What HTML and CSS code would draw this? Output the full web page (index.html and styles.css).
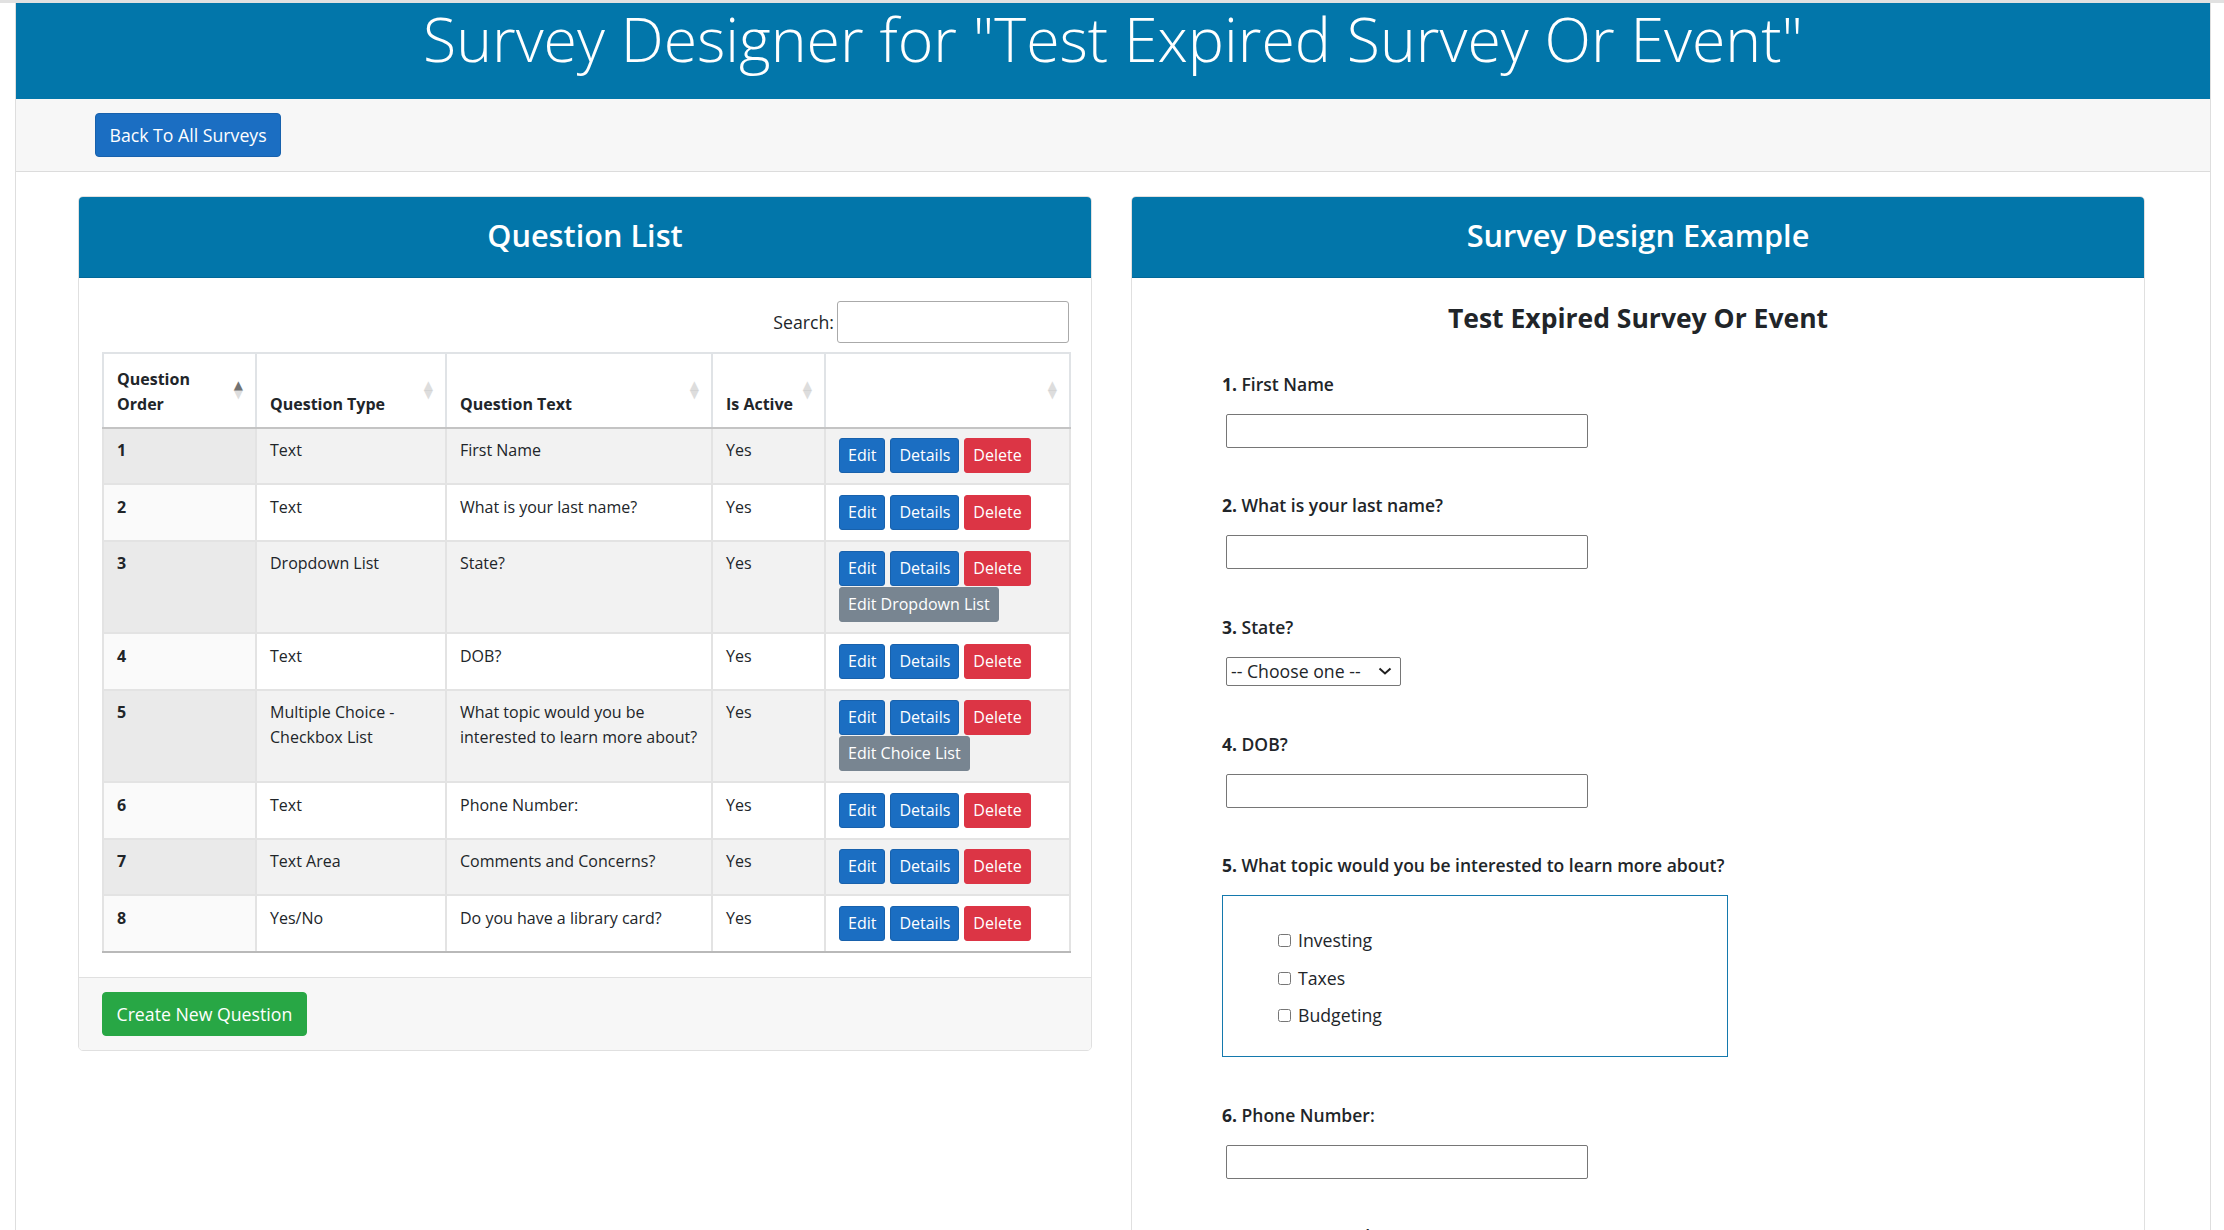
FILE: index.html
```html
<!DOCTYPE html>
<html lang="en">
<head>
<meta charset="utf-8">
<title>Survey Designer</title>
<link rel="stylesheet" href="styles.css">
</head>
<body>
<div class="page">
  <header class="banner">
    <h1 class="banner-title">Survey Designer for "Test Expired Survey Or Event"</h1>
  </header>
  <nav class="toolbar">
    <a class="btn btn-md btn-primary" href="#">Back To All Surveys</a>
  </nav>
  <main class="content">
    <section class="card">
      <div class="card-header"><h2 class="card-title">Question List</h2></div>
      <div class="card-body">
        <div class="dt-filter">
          <label class="dt-search">Search:<input type="search" class="dt-input"></label>
        </div>
        <table class="dt">
          <colgroup>
            <col class="c-order"><col class="c-type"><col class="c-text"><col class="c-active"><col class="c-actions">
          </colgroup>
          <thead>
            <tr>
              <th class="sort sort-asc">Question Order</th>
              <th class="sort">Question Type</th>
              <th class="sort">Question Text</th>
              <th class="sort">Is Active</th>
              <th class="sort"></th>
            </tr>
          </thead>
          <tbody>
            <tr>
              <td>1</td><td>Text</td><td>First Name</td><td>Yes</td>
              <td><div class="actions"><a class="btn btn-sm btn-primary" href="#">Edit</a><a class="btn btn-sm btn-primary" href="#">Details</a><a class="btn btn-sm btn-danger" href="#">Delete</a></div></td>
            </tr>
            <tr>
              <td>2</td><td>Text</td><td>What is your last name?</td><td>Yes</td>
              <td><div class="actions"><a class="btn btn-sm btn-primary" href="#">Edit</a><a class="btn btn-sm btn-primary" href="#">Details</a><a class="btn btn-sm btn-danger" href="#">Delete</a></div></td>
            </tr>
            <tr>
              <td>3</td><td>Dropdown List</td><td>State?</td><td>Yes</td>
              <td><div class="actions"><a class="btn btn-sm btn-primary" href="#">Edit</a><a class="btn btn-sm btn-primary" href="#">Details</a><a class="btn btn-sm btn-danger" href="#">Delete</a><a class="btn btn-sm btn-secondary" href="#">Edit Dropdown List</a></div></td>
            </tr>
            <tr>
              <td>4</td><td>Text</td><td>DOB?</td><td>Yes</td>
              <td><div class="actions"><a class="btn btn-sm btn-primary" href="#">Edit</a><a class="btn btn-sm btn-primary" href="#">Details</a><a class="btn btn-sm btn-danger" href="#">Delete</a></div></td>
            </tr>
            <tr>
              <td>5</td><td>Multiple Choice - Checkbox List</td><td>What topic would you be interested to learn more about?</td><td>Yes</td>
              <td><div class="actions"><a class="btn btn-sm btn-primary" href="#">Edit</a><a class="btn btn-sm btn-primary" href="#">Details</a><a class="btn btn-sm btn-danger" href="#">Delete</a><a class="btn btn-sm btn-secondary" href="#">Edit Choice List</a></div></td>
            </tr>
            <tr>
              <td>6</td><td>Text</td><td>Phone Number:</td><td>Yes</td>
              <td><div class="actions"><a class="btn btn-sm btn-primary" href="#">Edit</a><a class="btn btn-sm btn-primary" href="#">Details</a><a class="btn btn-sm btn-danger" href="#">Delete</a></div></td>
            </tr>
            <tr>
              <td>7</td><td>Text Area</td><td>Comments and Concerns?</td><td>Yes</td>
              <td><div class="actions"><a class="btn btn-sm btn-primary" href="#">Edit</a><a class="btn btn-sm btn-primary" href="#">Details</a><a class="btn btn-sm btn-danger" href="#">Delete</a></div></td>
            </tr>
            <tr>
              <td>8</td><td>Yes/No</td><td>Do you have a library card?</td><td>Yes</td>
              <td><div class="actions"><a class="btn btn-sm btn-primary" href="#">Edit</a><a class="btn btn-sm btn-primary" href="#">Details</a><a class="btn btn-sm btn-danger" href="#">Delete</a></div></td>
            </tr>
          </tbody>
        </table>
      </div>
      <div class="card-footer">
        <a class="btn btn-md btn-success" href="#">Create New Question</a>
      </div>
    </section>

    <section class="card">
      <div class="card-header"><h2 class="card-title">Survey Design Example</h2></div>
      <div class="card-body survey">
        <h4 class="survey-title">Test Expired Survey Or Event</h4>
        <form class="survey-form">
          <div class="question">
            <label class="question-label"><span class="num">1.</span> First Name</label>
            <input type="text" class="text-field">
          </div>
          <div class="question">
            <label class="question-label"><span class="num">2.</span> What is your last name?</label>
            <input type="text" class="text-field">
          </div>
          <div class="question">
            <label class="question-label"><span class="num">3.</span> State?</label>
            <div class="select-wrap">
              <select class="select-field"><option>-- Choose one --</option></select>
              <svg class="select-chevron" width="14" height="8" viewBox="0 0 14 8" aria-hidden="true"><path d="M1.5 1.5 L7 6.5 L12.5 1.5" fill="none" stroke="#1f1f1f" stroke-width="2"/></svg>
            </div>
          </div>
          <div class="question">
            <label class="question-label"><span class="num">4.</span> DOB?</label>
            <input type="text" class="text-field">
          </div>
          <div class="question">
            <label class="question-label"><span class="num">5.</span> What topic would you be interested to learn more about?</label>
            <div class="choice-box">
              <label class="choice"><input type="checkbox">Investing</label>
              <label class="choice"><input type="checkbox">Taxes</label>
              <label class="choice"><input type="checkbox">Budgeting</label>
            </div>
          </div>
          <div class="question">
            <label class="question-label"><span class="num">6.</span> Phone Number:</label>
            <input type="text" class="text-field">
          </div>
          <div class="question">
            <label class="question-label"><span class="num">7.</span> Comments and Concerns?</label>
            <textarea class="area-field"></textarea>
          </div>
          <div class="question">
            <label class="question-label"><span class="num">8.</span> Do you have a library card?</label>
            <label class="choice"><input type="radio" name="card">Yes</label>
            <label class="choice"><input type="radio" name="card">No</label>
          </div>
        </form>
      </div>
    </section>
  </main>
</div>
</body>
</html>
```

FILE: styles.css
```css
* { box-sizing: border-box; }

html, body { margin: 0; height: 100%; }

body {
  font-family: "Open Sans", "Noto Sans", "Liberation Sans", sans-serif;
  font-size: 17.7px;
  line-height: 1.5;
  color: #212529;
  background: #fff;
  border-top: 3px solid #e1e1e1;
  overflow: hidden;
}

.page {
  margin-left: 15px;
  width: 2196px;
  height: calc(100vh - 3px);
  border-left: 1px solid #dedede;
  border-right: 1px solid #dedede;
  overflow: hidden;
}

/* banner */
.banner {
  height: 96px;
  background: #0276aa;
  color: #fff;
  text-align: center;
}
.banner-title {
  margin: 0;
  font-size: 60.8px;
  font-weight: 300;
  line-height: 72px;
  white-space: nowrap;
}

/* toolbar */
.toolbar {
  height: 73px;
  background: #f7f7f7;
  border-bottom: 1px solid #dcdcdc;
  padding: 14px 0 0 79px;
}

/* buttons */
.btn {
  display: inline-flex;
  align-items: center;
  justify-content: center;
  border: 1px solid transparent;
  border-radius: 4px;
  color: #fff;
  text-decoration: none;
  white-space: nowrap;
  font-weight: 400;
}
.btn-md { height: 44px; padding: 0 13.5px; font-size: 17.7px; }
.btn-sm { height: 35px; padding: 0 8px; font-size: 16px; border-radius: 3px; }
.btn-primary { background: #1b6ec2; border-color: #1861ac; }
.btn-danger { background: #dc3545; border-color: #dc3545; }
.btn-secondary { background: #788591; border-color: #788591; }
.btn-success { background: #28a745; border-color: #28a745; }

/* layout */
.content {
  display: grid;
  grid-template-columns: 1014px 1014px;
  column-gap: 39px;
  align-items: start;
  padding: 24px 0 0 62px;
}

.card {
  border: 1px solid #e0e0e0;
  border-radius: 5px;
  overflow: hidden;
  background: #fff;
}
.card-header {
  background: #0276aa;
  color: #fff;
  text-align: center;
  padding: 20px 16px 23px;
  border-bottom: 1px solid #026898;
}
.card-title {
  margin: 0;
  font-size: 30.7px;
  font-weight: 600;
  line-height: 1.2;
}
.card-body { padding: 23px 22px 24px 23px; }
.card-footer {
  background: #f7f7f7;
  border-top: 1px solid #e0e0e0;
  padding: 14px 23px;
}

/* datatable */
.dt-filter {
  display: flex;
  justify-content: flex-end;
  margin-bottom: 9px;
}
.dt-search {
  display: flex;
  align-items: center;
  gap: 3px;
}
.dt-input {
  width: 232px;
  height: 42px;
  border: 1px solid #aaa;
  border-radius: 3px;
  padding: 5px;
  font: inherit;
}

.dt {
  width: 100%;
  table-layout: fixed;
  border-collapse: collapse;
  font-size: 16px;
  line-height: 25px;
  border: 2px solid #e0e3e6;
}
.c-order { width: 153px; }
.c-type { width: 190px; }
.c-text { width: 266px; }
.c-active { width: 113px; }
.c-actions { width: 245px; }

.dt th {
  position: relative;
  text-align: left;
  vertical-align: bottom;
  font-weight: 700;
  padding: 13px 26px 10px 13px;
  border: 2px solid #e0e3e6;
  border-bottom: 2px solid #c4c4c4;
  background: #fff;
}
.dt th.sort::before,
.dt th.sort::after {
  position: absolute;
  right: 12px;
  font-family: "DejaVu Sans", sans-serif;
  font-size: 12px;
  line-height: 9px;
  color: #000;
  opacity: .13;
}
.dt th.sort::before { content: "\25B2"; bottom: 50%; }
.dt th.sort::after { content: "\25BC"; top: 50%; }
.dt th.sort-asc::before { opacity: .55; }

.dt td {
  vertical-align: top;
  padding: 9.5px 13px 10px;
  border: 2px solid #e3e3e3;
}
.dt td:first-child { font-weight: 700; }
.dt tbody tr:nth-child(odd) td { background: #f2f2f2; }
.dt tbody tr:nth-child(odd) td:first-child { background: #eaeaea; }
.dt tbody tr:nth-child(even) td:first-child { background: #fafafa; }
.dt tbody tr:last-child td { border-bottom: 2px solid #b9b9b9; }

.actions {
  display: flex;
  flex-wrap: wrap;
  gap: 1px 5px;
}

/* survey preview */
.survey { padding: 25px 24px 0; }
.survey-title {
  text-align: center;
  font-size: 26.5px;
  font-weight: 700;
  line-height: 1.2;
  margin: 0 0 36px;
}
.survey-form { padding-left: 66px; }
.question { margin-bottom: 44.7px; }
.question-label {
  display: block;
  font-size: 17.5px;
  font-weight: 600;
  line-height: 26px;
  margin-bottom: 17px;
}
.question-label .num { font-weight: 700; }

.text-field {
  display: block;
  margin-left: 4px;
  width: 362px;
  height: 34px;
  border: 1px solid #767676;
  border-radius: 2px;
  font: inherit;
}
.select-wrap {
  position: relative;
  width: 175px;
  margin-left: 4px;
}
.select-field {
  display: block;
  width: 175px;
  height: 29px;
  border: 1px solid #767676;
  border-radius: 2px;
  font-family: inherit;
  font-size: 17.7px;
  line-height: 27px;
  color: #212529;
  background: #fff;
  padding: 0 24px 0 4px;
  appearance: none;
  -webkit-appearance: none;
}
.select-chevron {
  position: absolute;
  right: 9px;
  top: 10px;
  pointer-events: none;
}
.area-field {
  display: block;
  margin-left: 4px;
  width: 362px;
  height: 80px;
  border: 1px solid #767676;
  border-radius: 2px;
}
.choice-box {
  width: 506px;
  border: 1px solid #1479ad;
  padding: 26px 0 21px 55px;
}
.choice {
  display: block;
  line-height: 37.5px;
}
.choice input {
  margin: 0 7px 0 0;
  width: 13px;
  height: 13px;
}
```
